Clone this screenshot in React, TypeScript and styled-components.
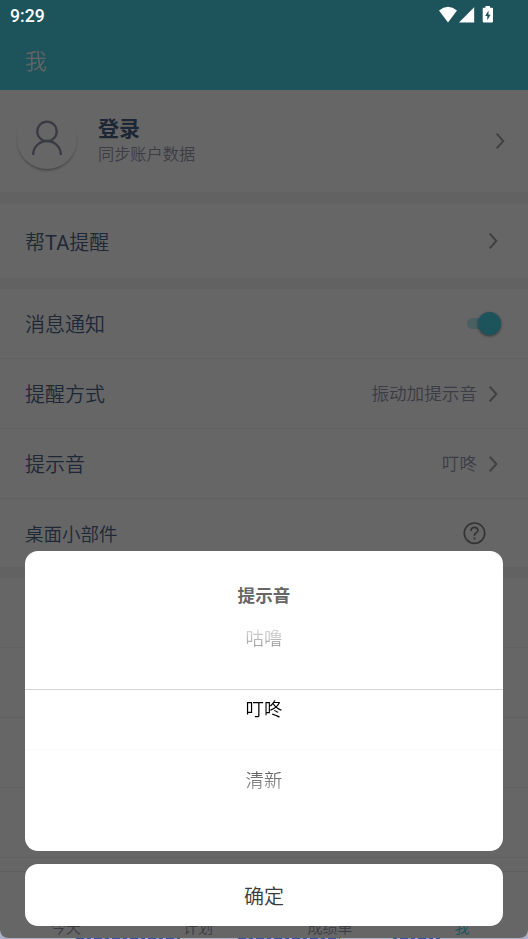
import React from "react";
import styled, { createGlobalStyle } from "styled-components";

const GlobalStyle = createGlobalStyle`
  *, *::before, *::after { box-sizing: border-box; }
  html, body { margin: 0; padding: 0; overflow: hidden; }
  body { font-family: Roboto, "Noto Sans CJK SC", sans-serif; font-weight: 350; }
`;

const Stage = styled.div`
  position: relative;
  width: 528px;
  height: 939px;
  overflow: hidden;
  background: #a9b0c8;
`;

const Screen = styled.div`
  position: relative;
  display: flex;
  flex-direction: column;
  height: 938px;
  overflow: hidden;
  background: #fff;
  border-radius: 0 0 8px 8px;
`;

const Header = styled.header`
  height: 90px;
  flex: none;
  padding: 44px 25px 0;
  background: #4ad1e6;
  color: #fff;
  font-size: 22px;
  line-height: 36px;
`;

const Title = styled.span`
  opacity: 0.93;
`;

const Profile = styled.section`
  display: flex;
  align-items: center;
  flex: none;
  height: 102px;
  padding: 0 23px 0 17px;
`;

const Avatar = styled.div`
  display: flex;
  align-items: center;
  justify-content: center;
  width: 60px;
  height: 60px;
  margin-top: -5px;
  padding-bottom: 2px;
  border-radius: 50%;
  box-shadow: 0 2px 3px -1px rgba(0, 0, 0, 0.45);
`;

const ProfileText = styled.div`
  flex: 1;
  padding: 0 0 0 21px;
`;

const Name = styled.div`
  margin-top: -1px;
  color: #485f83;
  font-size: 21px;
  font-weight: 700;
  line-height: 28px;
`;

const Hint = styled.div`
  color: #9697ac;
  font-size: 16.2px;
  line-height: 24px;
`;

const Band = styled.div<{ $h: number }>`
  flex: none;
  height: ${(p) => p.$h}px;
  background: #f5f5f5;
`;

const Row = styled.div<{ $h: number; $line?: boolean; $right?: number }>`
  display: flex;
  align-items: center;
  flex: none;
  height: ${(p) => p.$h}px;
  padding: 0 ${(p) => p.$right ?? 30}px 0 25px;
  border-bottom: ${(p) => (p.$line ? "1px solid #f3f3f3" : "0")};
`;

const Label = styled.span<{ $size?: number }>`
  flex: 1;
  padding-top: 3px;
  color: #4d648a;
  font-size: ${(p) => p.$size ?? 20}px;
  line-height: 30px;
`;

const Latin = styled.span`
  font-weight: 400;
`;

const Value = styled.span`
  margin-right: 11px;
  color: #9697ac;
  font-size: 17.6px;
  line-height: 26px;
`;

const Track = styled.span`
  display: flex;
  align-items: center;
  justify-content: flex-end;
  width: 34px;
  height: 11px;
  border-radius: 6px;
  background: #b7edf5;
`;

const Thumb = styled.span`
  flex: none;
  width: 23px;
  height: 23px;
  border-radius: 50%;
  background: #4ad1e6;
  box-shadow: 0 1px 3px rgba(0, 0, 0, 0.5);
`;

const Nav = styled.nav`
  display: grid;
  grid-template-columns: repeat(4, 1fr);
  flex: 1;
  align-items: end;
  border-top: 1px solid #efefef;
`;

const NavItem = styled.span<{ $active?: boolean }>`
  color: ${(p) => (p.$active ? "#4ad1e6" : "#9697ac")};
  font-size: 15px;
  line-height: 19px;
  text-align: center;
`;

const Scrim = styled.div`
  position: absolute;
  inset: 0;
  background: rgba(0, 0, 0, 0.6);
`;

const StatusBar = styled.div`
  position: absolute;
  inset: 0 0 auto 0;
  display: flex;
  align-items: center;
  justify-content: space-between;
  height: 32px;
  padding: 0 34px 0 10px;
  color: #fff;
  font-size: 17.6px;
  font-weight: 500;
  line-height: 32px;
`;

const StatusIcons = styled.svg`
  display: block;
  margin-top: -3px;
`;

const Dialog = styled.div`
  position: absolute;
  inset: 551px 25px 12px 25px;
  display: flex;
  flex-direction: column;
  gap: 13px;
`;

const Sheet = styled.section`
  height: 300px;
  padding-top: 30px;
  border-radius: 13px;
  background: #fff;
  text-align: center;
`;

const SheetTitle = styled.h2`
  margin: 0;
  color: #666;
  font-size: 17.6px;
  font-weight: 700;
  line-height: 30px;
`;

const Option = styled.div<{ $tone: "above" | "selected" | "below" }>`
  height: ${(p) => (p.$tone === "above" ? 79 : p.$tone === "selected" ? 60 : 62)}px;
  padding-top: ${(p) => (p.$tone === "above" ? 13 : p.$tone === "selected" ? 5 : 16)}px;
  border-bottom: ${(p) =>
    p.$tone === "above" ? "1px solid #d5d5d5" : p.$tone === "selected" ? "1px solid #fafafa" : "0"};
  font-size: 18.4px;
  line-height: 30px;

  span {
    color: transparent;
    background: ${(p) =>
      p.$tone === "above"
        ? "linear-gradient(#dedede, #999)"
        : p.$tone === "selected"
        ? "#000"
        : "linear-gradient(#555, #a0a0a0)"};
    background-clip: text;
    -webkit-background-clip: text;
  }
`;

const Confirm = styled.button`
  flex: none;
  height: 62px;
  padding: 0;
  border: 0;
  border-radius: 13px;
  background: #fff;
  color: #3c3c3c;
  font-family: inherit;
  font-size: 20px;
  font-weight: inherit;
`;

const BehindStrip = styled.div`
  height: 1px;
  margin-left: 76px;
  width: 364px;
  background:
    linear-gradient(90deg, transparent 104px, #a9b0c8 104px 162px, transparent 162px 264px, #a9b0c8 264px 317px, transparent 317px),
    repeating-linear-gradient(90deg, #3155a0 0 8px, #8b9cc5 8px 11px, #3155a0 11px 15px, #a9b0c8 15px 18px);
`;

const Chevron = () => (
  <svg width="10" height="18" viewBox="0 0 10 18" fill="none" stroke="#a0a0a0" strokeWidth="2">
    <path d="M1.7 1.7 8.3 9 1.7 16.3" />
  </svg>
);

export default function App() {
  return (
    <>
      <GlobalStyle />
      <Stage>
        <Screen>
          <Header>
            <Title>我</Title>
          </Header>
          <Profile>
            <Avatar>
              <svg width="32" height="36" viewBox="0 0 32 36" fill="none" stroke="#9091a8" strokeWidth="2.3">
                <circle cx="16" cy="11.4" r="9.7" />
                <path d="M2.2 35v-.5a13.8 13.5 0 0 1 27.6 0v.5" />
              </svg>
            </Avatar>
            <ProfileText>
              <Name>登录</Name>
              <Hint>同步账户数据</Hint>
            </ProfileText>
            <Chevron />
          </Profile>
          <Band $h={12} />
          <Row $h={74}>
            <Label $size={20}>帮<Latin>TA</Latin>提醒</Label>
            <Chevron />
          </Row>
          <Band $h={11} />
          <Row $h={70} $line $right={27}>
            <Label>消息通知</Label>
            <Track>
              <Thumb />
            </Track>
          </Row>
          <Row $h={70} $line>
            <Label>提醒方式</Label>
            <Value>振动加提示音</Value>
            <Chevron />
          </Row>
          <Row $h={70} $line>
            <Label>提示音</Label>
            <Value>叮咚</Value>
            <Chevron />
          </Row>
          <Row $h={68} $right={42}>
            <Label $size={18.5}>桌面小部件</Label>
            <svg width="23" height="23" viewBox="0 0 23 23" fill="none" stroke="#808080" strokeWidth="1.7">
              <circle cx="11.5" cy="11.2" r="10.2" />
              <path d="M8.1 8.9V8.4a3.4 3.1 0 0 1 6.8 0c0 2.3-3.4 2.2-3.4 4.8v.6M11.5 15.4v2" />
            </svg>
          </Row>
          <Band $h={11} />
          <Row $h={70} $line />
          <Row $h={70} $line />
          <Row $h={70} $line />
          <Row $h={70} $line />
          <Row $h={13} />
          <Nav>
            <NavItem>今天</NavItem>
            <NavItem>计划</NavItem>
            <NavItem>成绩单</NavItem>
            <NavItem $active>我</NavItem>
          </Nav>
          <Scrim />
          <StatusBar>
            <span>9:29</span>
            <StatusIcons width="55" height="18" viewBox="0 0 55 18" fill="#fff">
              <path d="M0 4.4Q9-3 18 4.4L9 16.5Z" />
              <path d="M20 16.5 35.2 1.3V16.5Z" />
              <path
                fillRule="evenodd"
                d="M46.5 1.8V0h4.5v1.8h2q1 0 1 1v12.8q0 1-1 1h-8.3q-1 0-1-1v-12.8q0-1 1-1ZM49.5 4.5l-3.3 5.4h2.1v4.4l3.3-5.6h-2.1Z"
              />
            </StatusIcons>
          </StatusBar>
          <Dialog>
            <Sheet>
              <SheetTitle>提示音</SheetTitle>
              <Option $tone="above"><span>咕噜</span></Option>
              <Option $tone="selected"><span>叮咚</span></Option>
              <Option $tone="below"><span>清新</span></Option>
            </Sheet>
            <Confirm>确定</Confirm>
          </Dialog>
        </Screen>
        <BehindStrip />
      </Stage>
    </>
  );
}
